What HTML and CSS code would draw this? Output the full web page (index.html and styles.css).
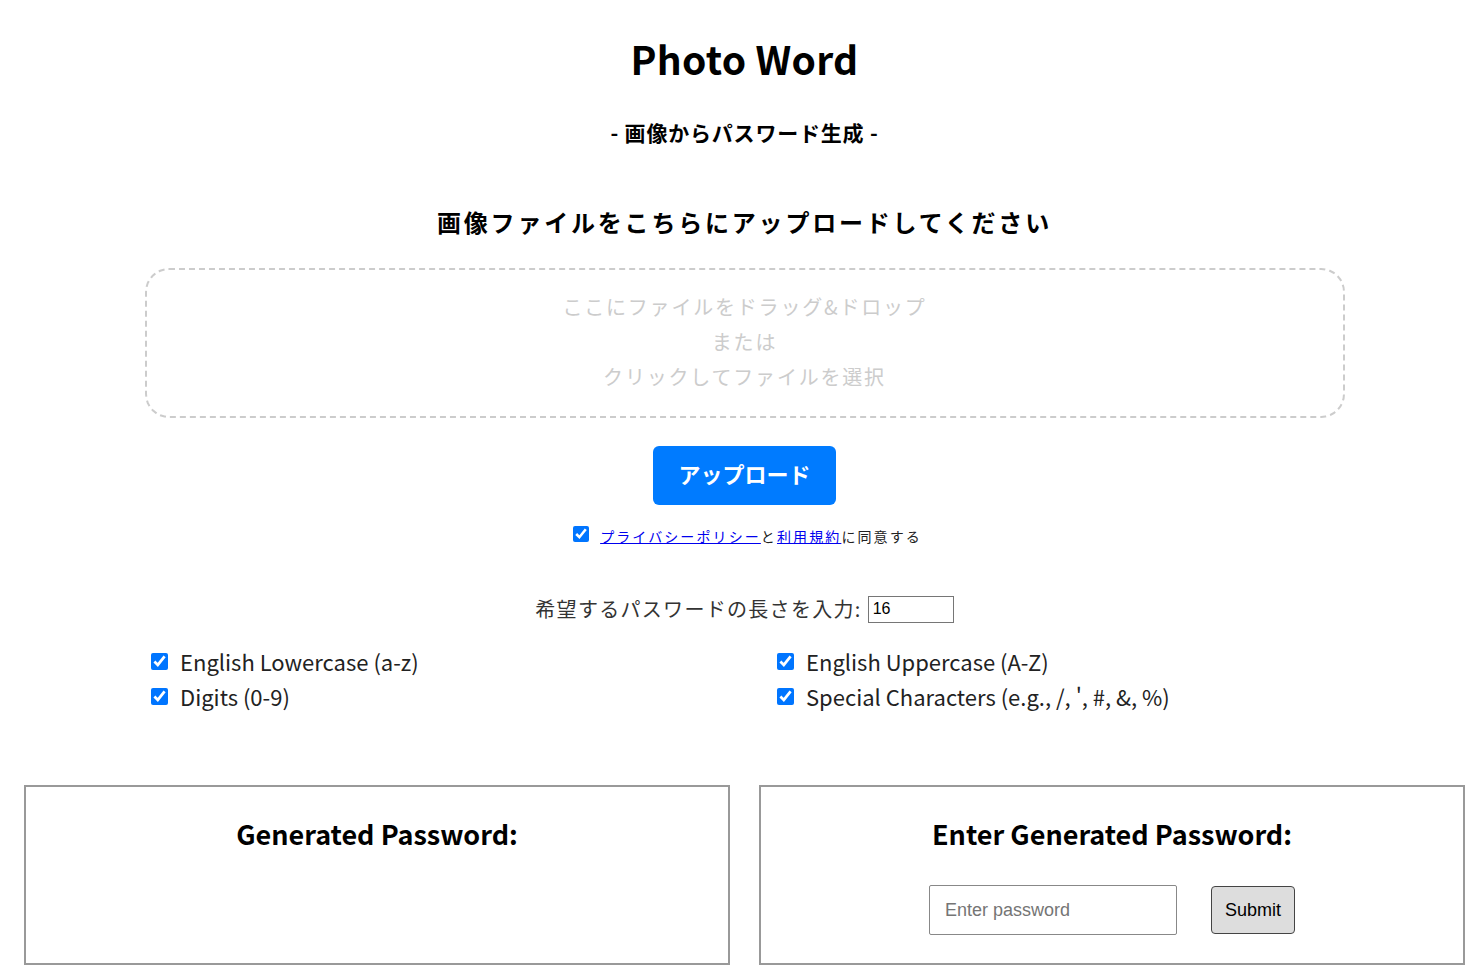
FILE: index.html
```html
<!DOCTYPE html>
<html lang="ja">
<head>
    <meta charset="UTF-8">
    <meta name="viewport" content="width=device-width, initial-scale=1.0">
    <title>Photo Word</title>
    <link rel="stylesheet" href="styles.css">
</head>
<body>

<h1 class="title">Photo Word</h1>
<h3 class="subtitle">- 画像からパスワード生成 -</h3>

<!-- アップロード -->
<h2 class="upload-title">画像ファイルをこちらにアップロードしてください</h2>
<div class="drop-zone">
    ここにファイルをドラッグ&amp;ドロップ<br>
    または<br>
    クリックしてファイルを選択
</div>

<div class="upload-row">
    <button class="upload-btn">アップロード</button>
</div>

<div class="agree">
    <input type="checkbox" id="agree" checked>
    <label for="agree"><a href="#">プライバシーポリシー</a>と<a href="#">利用規約</a>に同意する</label>
</div>

<!-- パスワード設定 -->
<div class="length-row">
    <label for="pw-length">希望するパスワードの長さを入力:</label>
    <input type="number" id="pw-length" class="length-input" value="16">
</div>

<div class="options">
    <label class="option"><input type="checkbox" checked> English Lowercase (a-z)</label>
    <label class="option"><input type="checkbox" checked> English Uppercase (A-Z)</label>
    <label class="option"><input type="checkbox" checked> Digits (0-9)</label>
    <label class="option"><input type="checkbox" checked> Special Characters (e.g., /, ', #, &amp;, %)</label>
</div>

<!-- 結果 -->
<div class="result">
    <div class="result-box">
        <h2 class="result-title">Generated Password:</h2>
    </div>
    <div class="result-box">
        <h2 class="result-title">Enter Generated Password:</h2>
        <div class="enter-row">
            <input type="text" class="pw-input" placeholder="Enter password">
            <button class="submit-btn">Submit</button>
        </div>
    </div>
</div>

</body>
</html>
```

FILE: styles.css
```css
body {
    font-family: 'Noto Sans CJK JP', 'Noto Sans', sans-serif;
    color: #000;
    text-align: center;
    margin: 0;
    padding: 0 0 0 7px;
    background: #fff;
}

.title {
    font-size: 39px;
    line-height: 50px;
    font-weight: bold;
    letter-spacing: 0.3px;
    margin: 33px 0 0;
}

.subtitle {
    font-size: 21px;
    line-height: 30px;
    font-weight: bold;
    letter-spacing: 0.8px;
    margin: 34px 0 0;
}

.upload-title {
    font-size: 24px;
    line-height: 34px;
    font-weight: bold;
    letter-spacing: 2.8px;
    margin: 58px 0 0;
}

.drop-zone {
    box-sizing: border-box;
    width: 1200px;
    margin: 29px auto 0;
    padding: 19px 0 22px;
    border: 2px dashed #ccc;
    border-radius: 24px;
    color: #ccc;
    font-size: 20px;
    line-height: 35px;
    letter-spacing: 1.8px;
    cursor: pointer;
}

.upload-row {
    margin-top: 28px;
}

.upload-btn {
    width: 183px;
    height: 59px;
    padding: 0 0 6px;
    background: #007bff;
    color: #fff;
    border: none;
    border-radius: 6px;
    font-family: inherit;
    font-size: 22px;
    font-weight: bold;
    cursor: pointer;
}

.agree {
    margin-top: 21px;
    padding-left: 6px;
    font-size: 14px;
    line-height: 20px;
    letter-spacing: 2.1px;
    color: #222;
    display: flex;
    justify-content: center;
    align-items: center;
}

.agree input {
    width: 16px;
    height: 16px;
    margin: 0 11px 4px 0;
}

.agree a {
    color: #0000ee;
}

.length-row {
    margin-top: 48px;
    font-size: 20px;
    line-height: 30px;
    letter-spacing: 1.3px;
    color: #333;
    display: flex;
    justify-content: center;
    align-items: center;
}

.length-input {
    box-sizing: border-box;
    width: 86px;
    height: 27px;
    margin-left: 6px;
    padding: 1px 4px;
    font-family: 'Liberation Sans', Arial, sans-serif;
    font-size: 16px;
    letter-spacing: 0;
    border: 1px solid #767676;
    -moz-appearance: textfield;
}

.length-input::-webkit-inner-spin-button,
.length-input::-webkit-outer-spin-button {
    -webkit-appearance: none;
    margin: 0;
}

.options {
    margin: 20px 0 0 144px;
    display: grid;
    grid-template-columns: 626px 1fr;
    text-align: left;
    font-size: 22px;
    line-height: 35px;
    color: #222;
}

.option {
    display: flex;
    align-items: center;
    gap: 12px;
}

.option input {
    width: 17px;
    height: 17px;
    margin: 0;
}

.result {
    margin-top: 71px;
    padding: 0 17px;
    display: flex;
    gap: 29px;
}

.result-box {
    box-sizing: border-box;
    width: 706px;
    height: 180px;
    border: 2px solid #999;
    padding-top: 29px;
}

.result-title {
    font-size: 27px;
    line-height: 36px;
    font-weight: bold;
    margin: 0;
}

.enter-row {
    margin-top: 33px;
    display: flex;
    justify-content: center;
    align-items: center;
    gap: 34px;
}

.pw-input {
    box-sizing: border-box;
    width: 248px;
    height: 50px;
    padding: 0 15px;
    border: 1px solid #888;
    border-radius: 2px;
    font-family: 'Liberation Sans', Arial, sans-serif;
    font-size: 18px;
}

.pw-input::placeholder {
    color: #757575;
}

.submit-btn {
    box-sizing: border-box;
    width: 84px;
    height: 48px;
    background: #ddd;
    border: 1px solid #444;
    border-radius: 4px;
    font-family: 'Liberation Sans', Arial, sans-serif;
    font-size: 18px;
    color: #000;
    cursor: pointer;
}
```
